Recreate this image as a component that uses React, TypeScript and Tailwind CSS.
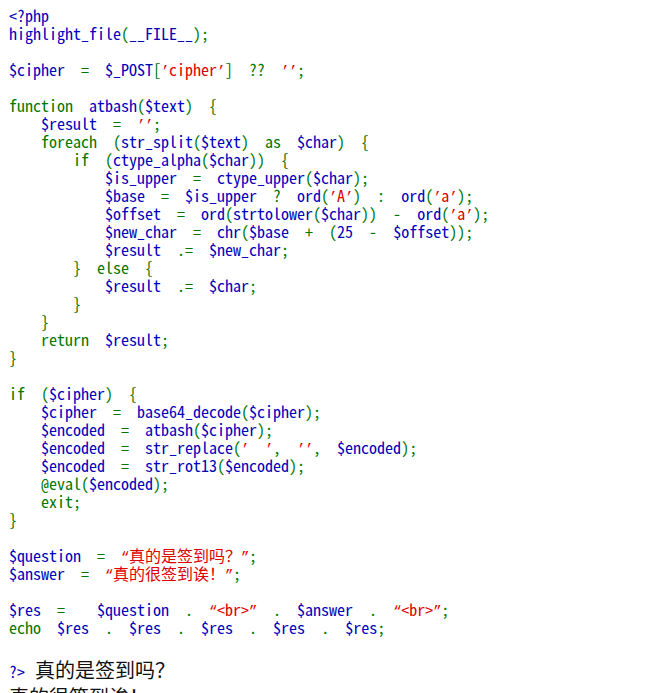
const B = 'text-[#0000BB]';
const G = 'text-[#007700]';
const R = 'text-[#DD0000]';

type Tok = [string, string];

const lines: Tok[][] = [
  [[B, '<?php']],
  [[B, 'highlight_file'], [G, '('], [B, '__FILE__'], [G, ');']],
  [],
  [[B, '$cipher'], [G, '  =  '], [B, '$_POST'], [G, '['], [R, '’cipher’'], [G, ']  ??  '], [R, '’’'], [G, ';']],
  [],
  [[G, 'function  '], [B, 'atbash'], [G, '('], [B, '$text'], [G, ')  {']],
  [[B, '    $result'], [G, '  =  '], [R, '’’'], [G, ';']],
  [[G, '    foreach  ('], [B, 'str_split'], [G, '('], [B, '$text'], [G, ')  as  '], [B, '$char'], [G, ')  {']],
  [[G, '        if  ('], [B, 'ctype_alpha'], [G, '('], [B, '$char'], [G, '))  {']],
  [[B, '            $is_upper'], [G, '  =  '], [B, 'ctype_upper'], [G, '('], [B, '$char'], [G, ');']],
  [[B, '            $base'], [G, '  =  '], [B, '$is_upper'], [G, '  ?  '], [B, 'ord'], [G, '('], [R, '’A’'], [G, ')  :  '], [B, 'ord'], [G, '('], [R, '’a’'], [G, ');']],
  [[B, '            $offset'], [G, '  =  '], [B, 'ord'], [G, '('], [B, 'strtolower'], [G, '('], [B, '$char'], [G, '))  -  '], [B, 'ord'], [G, '('], [R, '’a’'], [G, ');']],
  [[B, '            $new_char'], [G, '  =  '], [B, 'chr'], [G, '('], [B, '$base'], [G, '  +  ('], [B, '25'], [G, '  -  '], [B, '$offset'], [G, '));']],
  [[B, '            $result'], [G, '  .=  '], [B, '$new_char'], [G, ';']],
  [[G, '        }  else  {']],
  [[B, '            $result'], [G, '  .=  '], [B, '$char'], [G, ';']],
  [[G, '        }']],
  [[G, '    }']],
  [[G, '    return  '], [B, '$result'], [G, ';']],
  [[G, '}']],
  [],
  [[G, 'if  ('], [B, '$cipher'], [G, ')  {']],
  [[B, '    $cipher'], [G, '  =  '], [B, 'base64_decode'], [G, '('], [B, '$cipher'], [G, ');']],
  [[B, '    $encoded'], [G, '  =  '], [B, 'atbash'], [G, '('], [B, '$cipher'], [G, ');']],
  [[B, '    $encoded'], [G, '  =  '], [B, 'str_replace'], [G, '('], [R, '’  ’'], [G, ',  '], [R, '’’'], [G, ',  '], [B, '$encoded'], [G, ');']],
  [[B, '    $encoded'], [G, '  =  '], [B, 'str_rot13'], [G, '('], [B, '$encoded'], [G, ');']],
  [[G, '    @eval('], [B, '$encoded'], [G, ');']],
  [[G, '    exit;']],
  [[G, '}']],
  [],
  [[B, '$question'], [G, '  =  '], [R, '“真的是签到吗？”'], [G, ';']],
  [[B, '$answer'], [G, '  =  '], [R, '“真的很签到诶！”'], [G, ';']],
  [],
  [[B, '$res'], [G, '  =    '], [B, '$question'], [G, '  .  '], [R, '“<br>”'], [G, '  .  '], [B, '$answer'], [G, '  .  '], [R, '“<br>”'], [G, ';']],
  [[G, 'echo  '], [B, '$res'], [G, '  .  '], [B, '$res'], [G, '  .  '], [B, '$res'], [G, '  .  '], [B, '$res'], [G, '  .  '], [B, '$res'], [G, ';']],
  [],
];

const mono = 'font-["Noto_Sans_Mono_CJK_SC","Liberation_Mono","Noto_Sans_CJK_SC",monospace]';

// curly quotes come out full width in the CJK mono face, so set them half width
function Text({ t }: { t: string }) {
  const parts = t.split(/([’“”])/);
  return (
    <>
      {parts.map((p, i) =>
        /^[’“”]$/.test(p) ? (
          <span key={i} className='inline-block w-[8px] font-["Liberation_Mono",monospace] text-[14px]'>{p}</span>
        ) : (
          p
        )
      )}
    </>
  );
}

export default function App() {
  return (
    <div className="w-[663px] h-[693px] overflow-hidden bg-white pl-[9px] pt-[6px]">
      <div className={`${mono} text-[16px] leading-[18px] whitespace-pre`}>
        {lines.map((line, i) => (
          <div key={i} className="h-[18px]">
            {line.map(([c, t], j) => (
              <span key={j} className={c}><Text t={t} /></span>
            ))}
          </div>
        ))}
      </div>
      <div className="flex items-baseline leading-[26px] mt-[3px]">
        <span className={`${mono} text-[16px] text-[#0000BB] whitespace-pre`}>?&gt;</span>
        <span className='font-["Noto_Sans_CJK_SC",sans-serif] text-[20px] text-[#111] ml-[10px]'>真的是签到吗？</span>
      </div>
      <div className='font-["Noto_Sans_CJK_SC",sans-serif] text-[20px] leading-[26px] text-[#111]'>真的很签到诶！</div>
    </div>
  );
}
